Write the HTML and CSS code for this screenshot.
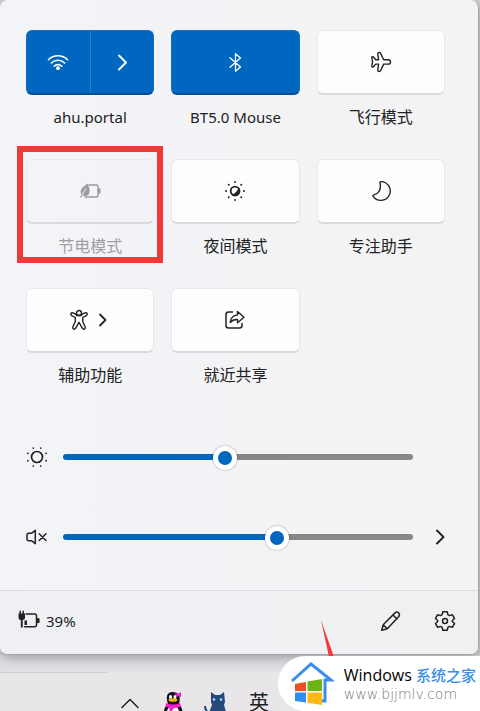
FILE: index.html
```html
<!DOCTYPE html>
<html lang="zh-CN">

<head>
    <meta charset="UTF-8">
    <meta name="viewport" content="width=device-width, initial-scale=1.0">
    <title>快速设置</title>
    <link rel="stylesheet" href="styles.css">
</head>

<body>
    <main class="panel">
        <div class="tiles">
            <div class="tile-item">
                <div class="tile tile-on">
                    <button type="button" class="tile-half" aria-labelledby="lbl-wifi">
                        <svg class="icon" viewBox="0 0 22 22">
                            <path d="M1.5 8.7a13.4 13.4 0 0 1 19 0M4.4 12a9.4 9.4 0 0 1 13.2 0M7.3 15.1a5.3 5.3 0 0 1 7.4 0" stroke-width="1.6" />
                            <circle cx="11" cy="17.2" r="1.9" class="solid" />
                        </svg>
                    </button>
                    <button type="button" class="tile-half" aria-label="WLAN">
                        <svg class="icon" viewBox="0 0 22 22"><path d="M8 4.500l7 7-7 7" stroke-width="2" /></svg>
                    </button>
                </div>
                <span class="tile-label latin" id="lbl-wifi">ahu.portal</span>
            </div>
            <div class="tile-item">
                <button type="button" class="tile tile-on" aria-labelledby="lbl-bt">
                    <svg class="icon" viewBox="0 0 22 22"><path d="M6 6.700l10.500 9.300-5 4.300V2.700l5 4.300L6 16.300" stroke-width="1.300" /></svg>
                </button>
                <span class="tile-label latin" id="lbl-bt">BT5.0 Mouse</span>
            </div>
            <div class="tile-item">
                <button type="button" class="tile" aria-labelledby="lbl-air">
                    <svg class="icon" viewBox="0 0 22 22">
                        <path d="M8.6 8.7L7.8 3.2q-.2-1.8 1.3-1.800 1 0 1.500 1l3.100 6.300h4.600a2.200 2.200 0 0 1 0 4.400h-4.600l-3.100 6.400q-.5 1-1.500 1-1.500 0-1.300-1.800l.8-5.600H5.700l-2 2.400q-.5.6-1.300.5-.8-.2-.6-1l.8-4.100-.8-4q-.2-1 .6-1.100.8-.1 1.300.5l2 2.400z" />
                    </svg>
                </button>
                <span class="tile-label" id="lbl-air">飞行模式</span>
            </div>
            <div class="tile-item tile-marked">
                <button type="button" class="tile" aria-labelledby="lbl-saver" disabled>
                    <svg class="icon" viewBox="0 0 22 22">
                        <path d="M10 5h7.500Q19 5 19 6.500v9q0 1.500-1.500 1.500H6" stroke-width="1.500" />
                        <path d="M19 8.500h2.500v5H19z" class="solid" />
                        <path d="M8.500 3.500C10 7 11 8.500 10.500 12q-.5 3.500-3.500 4-2 .4-3.200-.8L2 17.800l-1-.6 1.600-2.800C0 10 3.500 7.500 8.500 3.500z" class="solid" />
                        <path d="M3 15l4-6.500" class="vein" />
                    </svg>
                </button>
                <span class="tile-label" id="lbl-saver">节电模式</span>
            </div>
            <div class="tile-item">
                <button type="button" class="tile" aria-labelledby="lbl-night">
                    <svg class="icon" viewBox="0 0 22 22">
                        <circle cx="11" cy="11" r="4.300" stroke-width="1.800" />
                        <path d="M14.800 7.200A5 5 0 0 1 7.200 14.800Q13 13 14.800 7.200z" class="solid" />
                        <path d="M11 2v.1M11 19.900v.1M2 11h.1M19.900 11h.1M4.700 4.700l.1.1M17.200 17.200l.1.1M4.700 17.300l.1-.1M17.200 4.800l.1-.1" stroke-width="1.900" />
                    </svg>
                </button>
                <span class="tile-label" id="lbl-night">夜间模式</span>
            </div>
            <div class="tile-item">
                <button type="button" class="tile" aria-labelledby="lbl-focus">
                    <svg class="icon" viewBox="0 0 22 22"><path d="M10.500 1.600a9.400 9.400 0 1 1-7.500 14.600q-.3-.7.500-1C9 13.400 11.500 9.500 10 2.600q-.1-.9.500-1z" /></svg>
                </button>
                <span class="tile-label" id="lbl-focus">专注助手</span>
            </div>
            <div class="tile-item">
                <button type="button" class="tile" aria-labelledby="lbl-access">
                    <svg class="icon" viewBox="0 0 22 22">
                        <circle cx="11" cy="4" r="2.500" />
                        <path d="M8.500 5.500L5 3.900q-1.400-.5-2.100.6-.5 1.400.8 2.100L7.300 8.500v4L4.800 18q-.4 1.500.8 2.100 1.400.4 2.100-.9L11 13.400l3.300 5.800q.7 1.300 2.100.9 1.200-.6.800-2.100l-2.500-5.500v-4l3.600-1.900q1.300-.7.800-2.100-.7-1.100-2.100-.6l-3.500 1.600M8.500 6.500h5" />
                    </svg>
                    <svg class="icon" viewBox="0 0 22 22"><path d="M10 5.500l5.500 5.500L10 16.500" stroke-width="1.800" /></svg>
                </button>
                <span class="tile-label" id="lbl-access">辅助功能</span>
            </div>
            <div class="tile-item">
                <button type="button" class="tile" aria-labelledby="lbl-share">
                    <svg class="icon" viewBox="0 0 22 22">
                        <path d="M8.500 3H4.500Q2 3 2 5.500v11Q2 19 4.500 19h11q2.500 0 2.500-2.500v-2" stroke-width="1.500" />
                        <path d="M13.500 2.500l6.500 5.700-6.500 5.600v-3.300q-4.500-.3-7.300 3 .8-7 7.300-7.600z" />
                    </svg>
                </button>
                <span class="tile-label" id="lbl-share">就近共享</span>
            </div>
        </div>

        <div class="sliders">
            <div class="slider-row">
                <label for="brightness" aria-label="亮度">
                    <svg class="icon" viewBox="0 0 22 22">
                        <circle cx="11" cy="11" r="5.500" stroke-width="1.700" />
                        <path d="M7.300 2v.1M14.700 2v.1M7.300 20v.1M14.700 20v.1M1.800 7.300h.1M1.800 14.700h.1M20.100 7.300h.1M20.100 14.700h.1" stroke-width="1.700" />
                    </svg>
                </label>
                <input type="range" id="brightness" class="slider" min="0" max="100" value="46" style="--value: 46%">
            </div>
            <div class="slider-row">
                <label for="volume" aria-label="音量">
                    <svg class="icon" viewBox="0 0 22 22">
                        <path d="M9.300 4.300v13.400L5.500 14.700H2.700q-1.700 0-1.700-1.700V9q0-1.700 1.700-1.700h2.800zM13.200 7.700l6.800 6.800M20 7.700l-6.800 6.800" stroke-width="1.500" />
                    </svg>
                </label>
                <input type="range" id="volume" class="slider" min="0" max="100" value="62" style="--value: 62%">
                <button type="button" class="icon-button" aria-label="音频设备">
                    <svg class="icon" viewBox="0 0 22 22"><path d="M8 4.500l6.500 6.500L8 17.500" stroke-width="1.900" /></svg>
                </button>
            </div>
        </div>

        <div class="panel-footer">
            <div class="battery">
                <svg class="icon" viewBox="0 0 22 22">
                    <path d="M8 4h8.500q2 0 2 2v8.800q0 2-2 2H6.500" stroke-width="1.500" />
                    <path d="M19 8.300h2.500v4.700H19zM.5 3.500h6.500v4.200Q7 10 4.700 10v7.500H2.800V10Q.5 10 .5 7.700zM1.500.8H3v3H1.500zM4.500.8H6v3H4.500zM6.500 10.500H9v4.500H6.500z" class="solid" />
                </svg>
                <span class="latin">39%</span>
            </div>
            <div class="footer-actions">
                <button type="button" class="icon-button" aria-label="编辑快速设置">
                    <svg class="icon" viewBox="0 0 22 22"><path d="M1.700 20.300l1.500-5.600L15 2.900q1.800-1.600 3.500-.1t.3 3.800L7.300 18.800zM13 5l4 4M3.200 14.700l4.100 4.100" stroke-width="1.500" /></svg>
                </button>
                <button type="button" class="icon-button" aria-label="所有设置">
                    <svg class="icon" viewBox="0 0 22 22">
                        <path d="M8.800 1.800h4.400l.7 2.900 1.500.9 2.900-.9 2.200 3.800-2.200 2v1l2.200 2-2.200 3.800-2.900-.9-1.500.9-.7 2.900H8.800l-.7-2.900-1.500-.9-2.900.9-2.200-3.800 2.200-2v-1l-2.200-2 2.200-3.800 2.900.9 1.500-.9z" stroke-width="1.500" />
                        <circle cx="11" cy="11" r="2.500" stroke-width="1.500" />
                    </svg>
                </button>
            </div>
        </div>
    </main>

    <footer class="taskbar">
        <div class="window-edge"></div>
        <div class="tray">
            <button type="button" class="tray-button" aria-label="显示隐藏的图标">
                <svg class="icon" viewBox="0 0 22 22"><path d="M3 15.500L11 7.500l8 8" stroke-width="1.500" /></svg>
            </button>
            <button type="button" class="tray-button" aria-label="QQ">
                <svg class="tray-picture" viewBox="0 0 24 24">
                    <path d="M4 24Q1 18 7 13 3 1 12 1t6 12q5 5 3 11z" fill="#15151f" />
                    <ellipse cx="12" cy="21" rx="6" ry="6" fill="#fff" />
                    <ellipse cx="9.500" cy="6" rx="1.500" ry="2" fill="#fff" />
                    <ellipse cx="14" cy="6" rx="1.500" ry="2" fill="#fff" />
                    <ellipse cx="12" cy="9" rx="4.500" ry="1.800" fill="#f5b400" />
                    <path d="M5 12q7 3 14 0l1 3.500q-4 1.500-7 1.500l-2 3-3-.5.500-3-4-1zM14 2l3 1 3-2v5l-3-1-2 1z" fill="#f51fd0" />
                </svg>
            </button>
            <button type="button" class="tray-button" aria-label="应用">
                <svg class="tray-picture" viewBox="0 0 24 24">
                    <path d="M7 1l4 3h5l4-3 1 10-1 3 3 10H4l4-10-1-3z" fill="#234a78" />
                    <path d="M1 15q0 4 4 8" fill="none" stroke="#234a78" stroke-width="2" />
                    <circle cx="10" cy="8.500" r="1.300" fill="#b8dcff" />
                    <circle cx="17" cy="8.500" r="1.300" fill="#b8dcff" />
                </svg>
            </button>
            <button type="button" class="tray-button tray-lang">英</button>
        </div>
    </footer>

    <svg class="pointer" viewBox="0 0 16 38"><path d="M1 0l13 37H9z" fill="#f23a3a" /></svg>

    <a class="brand" href="#">
        <svg class="brand-logo" viewBox="0 0 44 46">
            <path d="M2 20L21 3l20 16h-6v21h-4" fill="none" stroke="#3a8ee6" stroke-width="3" />
            <path d="M5 23l11-2v9H5z" fill="#f04e23" />
            <path d="M17.500 20.500L32 18v12H17.500z" fill="#6cb512" />
            <path d="M5 31.500h11v10L5 40z" fill="#2f8df0" />
            <path d="M17.500 31.500H32V44l-14.500-2.200z" fill="#fdb813" />
        </svg>
        <span class="brand-text">
            <span class="brand-name">Windows <em>系统之家</em></span>
            <span class="brand-url">www.bjjmlv.com</span>
        </span>
    </a>
</body>

</html>
```
FILE: styles.css
```css
:root {
    --accent: #0067c0;
    --panel-bg: #f3f4f7;
    --text-color: #222;
    --mark: #f23938;
}

* {
    margin: 0;
    padding: 0;
    box-sizing: border-box;
}

body {
    position: relative;
    display: flex;
    flex-direction: column;
    height: 100vh;
    overflow: hidden;
    background: #d4d4d6;
    color: var(--text-color);
    font-family: "Noto Sans", "Noto Sans CJK SC", sans-serif;
    font-size: 16px;
}

button {
    border: none;
    background: none;
    color: inherit;
    font: inherit;
}

.latin {
    font-size: 15px;
}

.icon {
    display: block;
    width: 22px;
    height: 22px;
    fill: none;
    stroke: currentColor;
    stroke-width: 1.4;
    stroke-linecap: round;
    stroke-linejoin: round;
}

.icon .solid {
    fill: currentColor;
    stroke: none;
}

.icon .vein {
    stroke: var(--panel-bg);
    stroke-width: 1;
}

/* Quick settings panel */
.panel {
    position: relative;
    flex: none;
    margin-right: 1px;
    border-right: 1px solid #a5a5a5;
    border-bottom: 1px solid #a2a2a6;
    border-radius: 8px;
    background: linear-gradient(90deg, #f3f4f8, #f3f3f4);
    box-shadow: 0 3px 12px rgba(0, 0, 0, 0.3);
}

.tiles {
    display: grid;
    grid-template-columns: repeat(3, 1fr);
    gap: 30px 17px;
    padding: 30px 33px 58px 26px;
}

.tile-item {
    position: relative;
    display: flex;
    flex-direction: column;
    gap: 10px;
}

.tile {
    display: flex;
    align-items: center;
    justify-content: center;
    height: 65px;
    border: 1px solid #e8e8ea;
    border-bottom: 2px solid #dadadc;
    border-radius: 6px;
    background: #fdfdfd;
}

.tile-on {
    border: 1px solid #1570c2;
    border-bottom: 2px solid #064f94;
    background: var(--accent);
    color: #fff;
}

.tile:disabled {
    background: transparent;
    color: #9c9c9e;
}

.tile-half {
    display: flex;
    flex: 1;
    align-items: center;
    justify-content: center;
    align-self: stretch;
}

.tile-half + .tile-half {
    border-left: 1px solid #2b7fce;
}

.tile-label {
    line-height: 24px;
    text-align: center;
}

.tile:disabled + .tile-label {
    color: #a0a0a2;
}

.tile-marked::after {
    content: "";
    position: absolute;
    inset: -13px -9px -5px;
    border: 6px solid var(--mark);
    pointer-events: none;
}

.sliders {
    display: grid;
    gap: 56px;
    padding: 0 26px 41px;
}

.slider-row {
    display: grid;
    grid-template-columns: 22px 1fr 24px;
    align-items: center;
    gap: 15px;
    height: 24px;
}

.slider {
    width: 100%;
    height: 24px;
    background: none;
    appearance: none;
}

.slider::-webkit-slider-runnable-track {
    height: 6px;
    border-radius: 3px;
    background: linear-gradient(90deg, var(--accent) var(--value), #868686 var(--value));
}

.slider::-webkit-slider-thumb {
    width: 24px;
    height: 24px;
    margin-top: -8px;
    border: 5px solid #fff;
    border-radius: 50%;
    background: var(--accent);
    box-shadow: 0 0 2px rgba(0, 0, 0, 0.4);
    appearance: none;
}

.icon-button {
    display: flex;
    align-items: center;
    justify-content: center;
    width: 24px;
    height: 24px;
}

.panel-footer {
    display: flex;
    align-items: center;
    justify-content: space-between;
    height: 64px;
    padding: 0 21px 3px 18px;
    border-top: 1px solid #dcdde0;
    border-radius: 0 0 8px 8px;
    background: linear-gradient(90deg, #eef0f4, #f0f0f1);
}

.battery {
    display: flex;
    align-items: center;
    gap: 6px;
}

.footer-actions {
    display: flex;
    gap: 30px;
}

/* Taskbar */
.taskbar {
    flex: 1;
    padding-top: 17px;
    background: linear-gradient(#dfe0e4 17px, #e8e6e9 17px);
}

.window-edge {
    width: 108px;
    height: 1px;
    background: #cfcdd0;
}

.tray {
    display: flex;
    align-items: flex-start;
    gap: 19px;
    margin-top: 18px;
    margin-left: 118px;
}

.tray-button {
    display: flex;
    align-items: center;
    justify-content: center;
    width: 24px;
    height: 24px;
}

.tray-picture {
    width: 24px;
    height: 24px;
}

.tray-lang {
    font-size: 20px;
    line-height: 24px;
}

/* Overlays on top of the desktop */
.pointer {
    position: absolute;
    top: 620px;
    left: 320px;
    width: 16px;
    height: 38px;
}

.brand {
    position: absolute;
    right: 0;
    bottom: 0;
    display: flex;
    align-items: center;
    gap: 10px;
    height: 55px;
    padding: 0 4px 0 12px;
    border-radius: 28px 0 0 28px;
    background: #fff;
    text-decoration: none;
    white-space: nowrap;
}

.brand-logo {
    width: 44px;
    height: 46px;
}

.brand-text {
    display: flex;
    flex-direction: column;
    gap: 1px;
}

.brand-name {
    color: #000;
    font-family: "Open Sans", "Noto Sans CJK SC", sans-serif;
    font-size: 16px;
    font-weight: 500;
    line-height: 20px;
}

.brand-name em {
    color: #3a8ee6;
    font-size: 15px;
    font-style: normal;
}

.brand-url {
    color: #777;
    font-family: "DejaVu Sans", sans-serif;
    font-size: 14px;
    font-weight: 200;
    line-height: 16px;
}
```
